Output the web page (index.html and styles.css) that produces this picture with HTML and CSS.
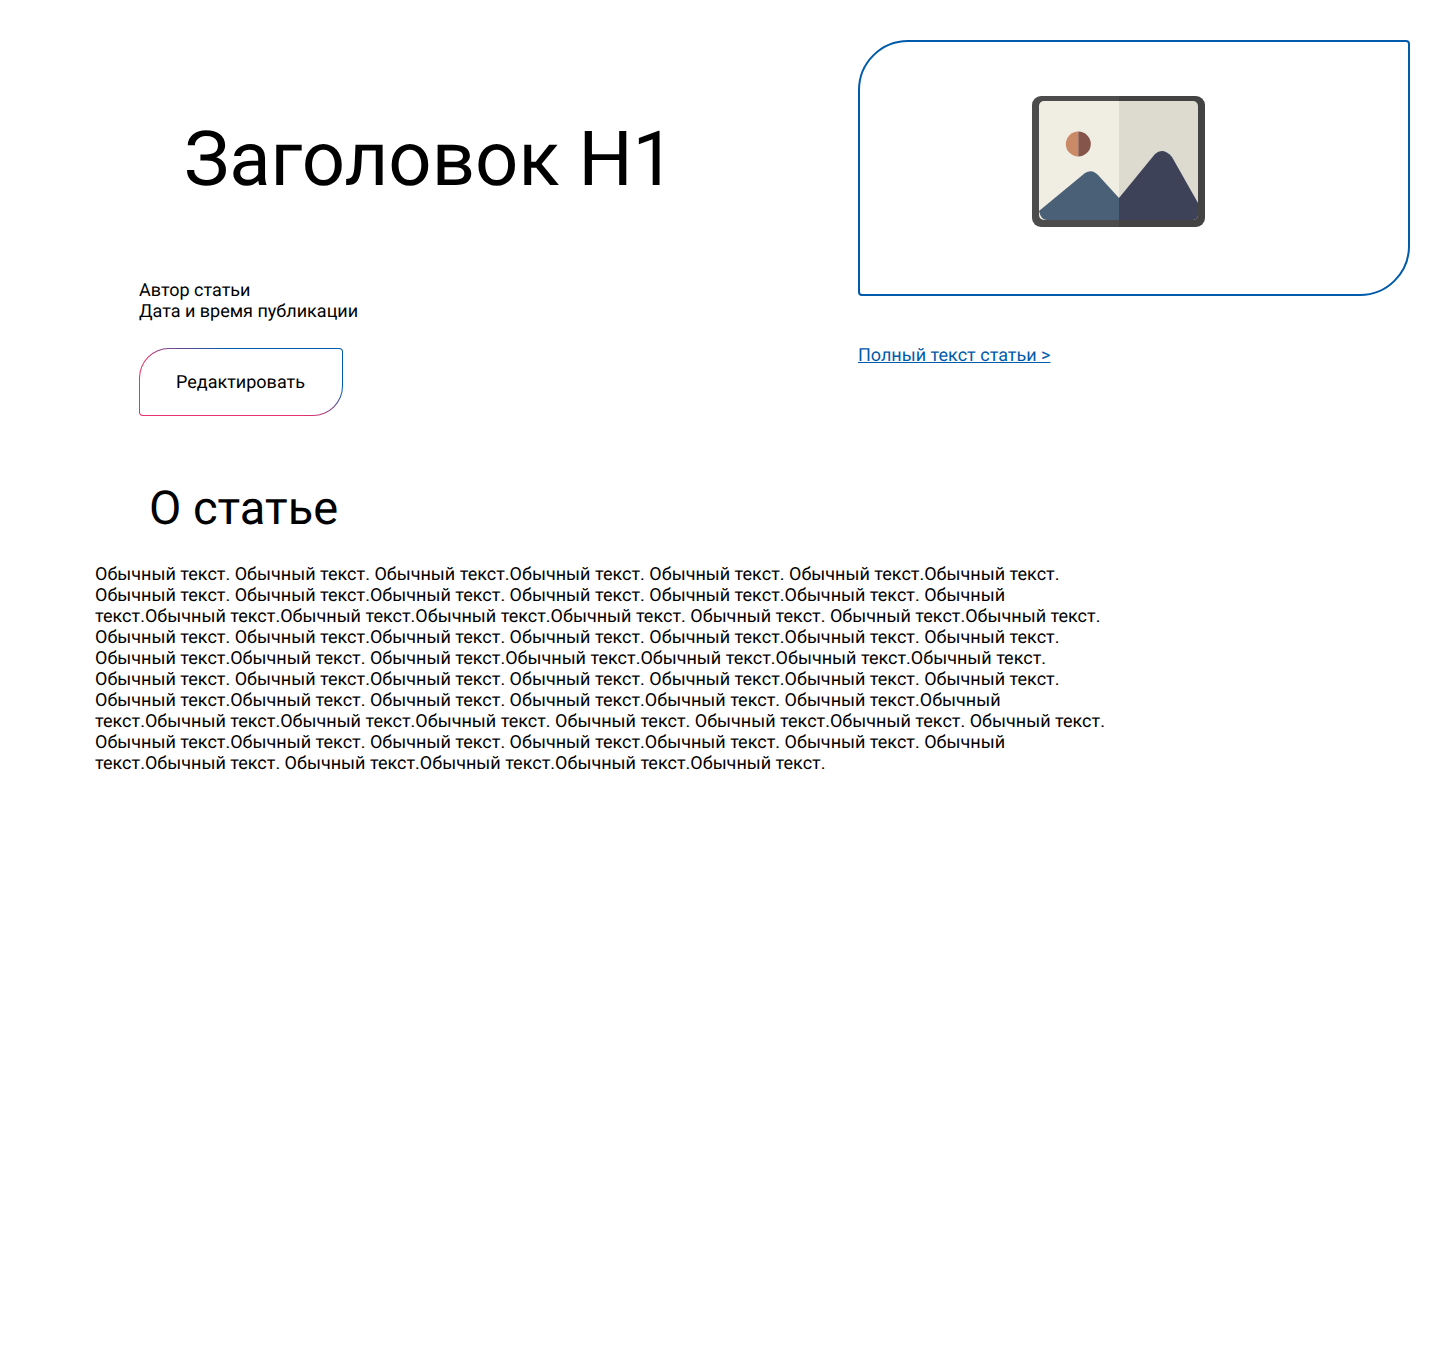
FILE: index.html
```html
<!DOCTYPE html>
<html lang="ru">
<head>
  <meta charset="UTF-8">
  <meta name="viewport" content="width=device-width, initial-scale=1.0">
  <title>Заголовок Н1</title>
  <link rel="stylesheet" href="styles.css">
</head>
<body>
  <div class="article-head">
    <div class="head-left">
      <h1>Заголовок Н1</h1>
      <div class="meta">
        <div>Автор статьи</div>
        <div>Дата и время публикации</div>
      </div>
      <button class="edit-btn">Редактировать</button>
    </div>
    <div class="head-right">
      <div class="image-box">
        <svg class="image-icon" width="173" height="131" viewBox="0 0 173 131">
          <path d="M87 0H9a9 9 0 0 0-9 9v113a9 9 0 0 0 9 9h78z" fill="#4c4c4c"/>
          <path d="M87 0h77a9 9 0 0 1 9 9v113a9 9 0 0 1-9 9H87z" fill="#434343"/>
          <path d="M87 5H12a5 5 0 0 0-5 5v109a5 5 0 0 0 5 5h75z" fill="#f0eee3"/>
          <path d="M87 5h74a5 5 0 0 1 5 5v109a5 5 0 0 1-5 5H87z" fill="#dddbd0"/>
          <path d="M46.300 35.500a12.500 12.500 0 0 0 0 25z" fill="#cb8a67"/>
          <path d="M46.300 35.500a12.500 12.500 0 0 1 0 25z" fill="#85544a"/>
          <path d="M7 115l46-38q7-4.500 13 2l21 23v22H15q-6 0-8-9z" fill="#4a6076"/>
          <path d="M87 102l36-44q8-7 17 3l26 46v12a5 5 0 0 1-5 5H87z" fill="#3e4259"/>
        </svg>
      </div>
      <a class="full-link" href="#">Полный текст статьи &gt;</a>
    </div>
  </div>

  <h2>О статье</h2>
  <p class="article-text">
    Обычный текст. Обычный текст. Обычный текст.Обычный текст. Обычный текст. Обычный текст.Обычный текст.
    Обычный текст. Обычный текст.Обычный текст. Обычный текст. Обычный текст.Обычный текст. Обычный
    текст.Обычный текст.Обычный текст.Обычный текст.Обычный текст. Обычный текст. Обычный текст.Обычный текст.
    Обычный текст. Обычный текст.Обычный текст. Обычный текст. Обычный текст.Обычный текст. Обычный текст.
    Обычный текст.Обычный текст. Обычный текст.Обычный текст.Обычный текст.Обычный текст.Обычный текст.
    Обычный текст. Обычный текст.Обычный текст. Обычный текст. Обычный текст.Обычный текст. Обычный текст.
    Обычный текст.Обычный текст. Обычный текст. Обычный текст.Обычный текст. Обычный текст.Обычный
    текст.Обычный текст.Обычный текст.Обычный текст. Обычный текст. Обычный текст.Обычный текст. Обычный текст.
    Обычный текст.Обычный текст. Обычный текст. Обычный текст.Обычный текст. Обычный текст. Обычный
    текст.Обычный текст. Обычный текст.Обычный текст.Обычный текст.Обычный текст.
  </p>
</body>
</html>
```

FILE: styles.css
```css
body {
  font-family: Roboto, Arial, sans-serif;
  font-size: 18px;
  line-height: 21px;
  color: #000;
  background: #fff;
  margin: 0;
  padding: 40px 30px 0 95px;
  text-rendering: geometricPrecision;
}
.article-head {
  display: flex;
}
.head-left {
  width: 763px;
  padding-left: 44px;
  box-sizing: border-box;
}
.head-left h1 {
  font-size: 76px;
  line-height: 84px;
  font-weight: 400;
  margin: 0;
  padding: 77px 0 0 45px;
}
.meta {
  margin-top: 79px;
}
.edit-btn {
  display: block;
  width: 204px;
  height: 68px;
  margin-top: 26px;
  padding: 0 0 0 36px;
  font: inherit;
  color: #000;
  text-align: left;
  text-rendering: geometricPrecision;
  border: 1px solid transparent;
  border-radius: 30px 4px 30px 4px;
  background: linear-gradient(#fff, #fff) padding-box, linear-gradient(20deg, #e5336b 42%, #005bab 70%) border-box;
  cursor: pointer;
}
.head-right {
  flex: 1;
}
.image-box {
  height: 256px;
  border: 2px solid #005bab;
  border-radius: 50px 4px 50px 4px;
  box-sizing: border-box;
  padding: 54px 0 0 172px;
}
.image-icon {
  display: block;
}
.full-link {
  display: inline-block;
  margin-top: 49px;
  color: #005bab;
}
h2 {
  font-size: 47px;
  line-height: 56px;
  font-weight: 400;
  margin: 0;
  padding: 65px 0 0 54px;
}
.article-text {
  width: 1015px;
  margin: 27px 0 0;
}
```
